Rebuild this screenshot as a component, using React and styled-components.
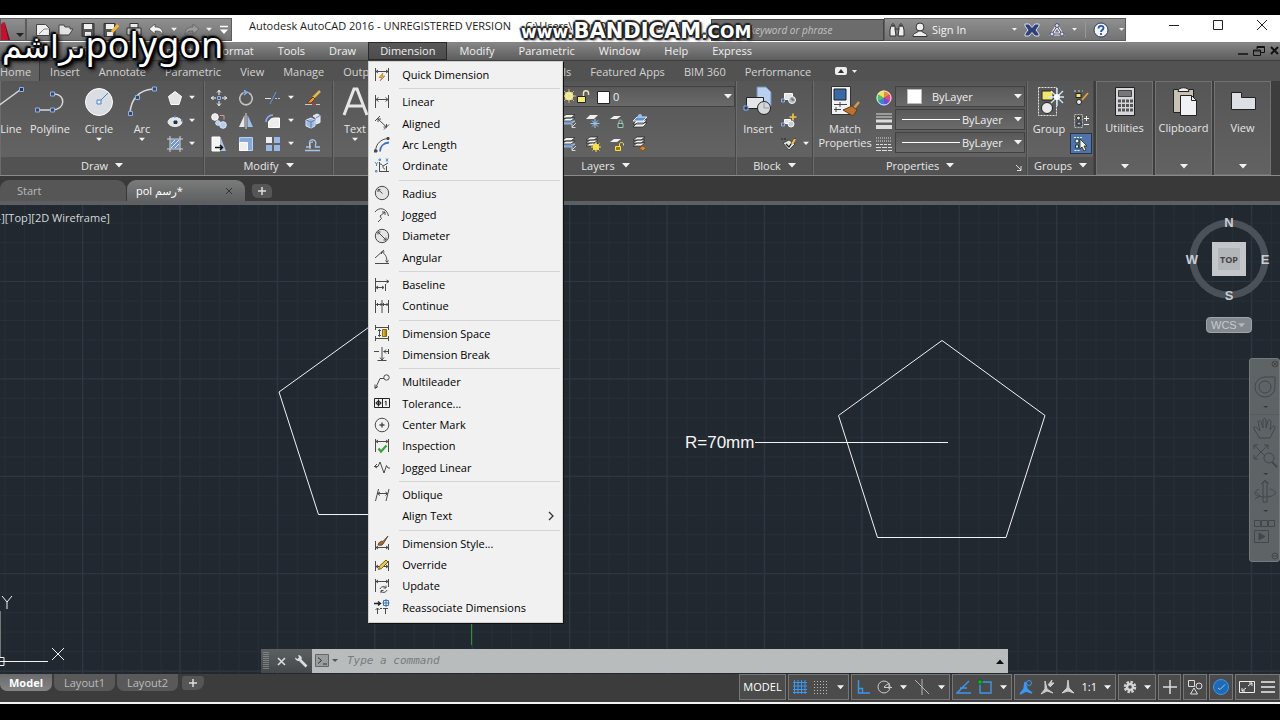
import React from "react";
import styled, { createGlobalStyle, css } from "styled-components";

const GlobalStyle = createGlobalStyle`
  * {
    box-sizing: border-box;
  }
  body {
    margin: 0;
    background: #000;
    overflow: hidden;
    font-family: "Open Sans", "Noto Sans", "DejaVu Sans", sans-serif;
    font-size: 11px;
    color: #e6e6e6;
  }
  button, input, select {
    font: inherit;
    color: inherit;
    margin: 0;
    padding: 0;
    border: none;
    background: none;
  }
  svg {
    display: block;
    flex: none;
  }
`;

const Screen = styled.div`
  display: flex;
  flex-direction: column;
  height: 100vh;
  padding: 15px 0 16px;
  background: #000;
`;

const AppWindow = styled.main`
  position: relative;
  flex: 1;
  min-height: 0;
  display: flex;
  flex-direction: column;
  background: #3a3a3a;
  border-bottom: 2px solid #f2f2f2;
`;

/* ---------- title bar ---------- */

const TitleBar = styled.header`
  display: flex;
  align-items: flex-end;
  height: 27px;
  padding-bottom: 1px;
  background: #fff;
  color: #1b1b1b;
`;

const barFill = css`
  background: linear-gradient(#8f8f8f, #737373);
  border: 1px solid #5c5c5c;
`;

const AppButton = styled.button`
  ${barFill}
  display: flex;
  align-items: center;
  width: 26px;
  height: 23px;
`;

const QuickAccess = styled.div`
  ${barFill}
  display: flex;
  align-items: center;
  justify-content: space-between;
  width: 206px;
  height: 23px;
  padding: 0 2px 0 8px;
`;

const IconButton = styled.button`
  display: flex;
  align-items: center;
  justify-content: center;
  flex: none;
  width: ${(p) => p.$w || 18}px;
  height: ${(p) => p.$h || 18}px;
`;

const Title = styled.h1`
  flex: 1;
  align-self: flex-start;
  overflow: hidden;
  margin: 0;
  padding-left: 17px;
  font-size: 11px;
  font-weight: normal;
  line-height: 21px;
  white-space: pre;
`;

const Search = styled.input`
  width: 173px;
  height: 22px;
  padding-left: 7px;
  background: #6c6c6c;
  border: 1px solid #444;
  color: #ddd;
  font-size: 10px;
  &::placeholder {
    color: #c2c2c2;
    font-style: italic;
    opacity: 1;
  }
`;

const InfoCenter = styled.div`
  ${barFill}
  display: flex;
  align-items: center;
  width: 242px;
  height: 23px;
  padding-left: 2px;
  color: #f3f3f3;
`;

const SignIn = styled.button`
  width: 80px;
  text-align: left;
`;

const WindowControls = styled.div`
  display: flex;
  align-items: center;
  justify-content: flex-end;
  gap: 26px;
  width: 154px;
  height: 27px;
  padding: 0 9px 5px 0;
`;

/* ---------- menu bar ---------- */

const MenuBar = styled.nav`
  display: flex;
  align-items: stretch;
  height: 19px;
  padding-left: 18px;
  background: linear-gradient(#878787, #5d5d5d);
  border-bottom: 1px solid #3f3f3f;
`;

const MenuSlot = styled.div`
  position: relative;
  display: flex;
  flex: none;
`;

const MenuButton = styled.button`
  padding: 0 12px;
  line-height: 18px;
  color: #f0f0f0;
  ${(p) =>
    p.$open &&
    css`
      background: linear-gradient(#595959, #4b4b4b);
      box-shadow: inset 0 0 0 1px #2a2a2a;
    `}
`;

const DocControls = styled.div`
  display: flex;
  align-items: center;
  gap: 5px;
  margin-left: auto;
`;

const Menu = styled.ul`
  position: absolute;
  z-index: 5;
  top: 19px;
  left: 0;
  display: flex;
  flex-direction: column;
  width: 195px;
  height: 562px;
  margin: 0;
  padding: 2px 2px 4px;
  list-style: none;
  background: #f1f1f1;
  border: 1px solid #cfcfcf;
  box-shadow: 1px 1px 0 #111;
`;

const MenuRow = styled.li`
  flex: 1;
  display: flex;
`;

const MenuRule = styled.li`
  flex: none;
  height: 6px;
  margin-left: 28px;
  background: linear-gradient(#d5d5d5, #d5d5d5) 0 3px / 100% 1px no-repeat;
`;

const MenuItem = styled.button`
  flex: 1;
  display: grid;
  grid-template-columns: 16px 1fr 12px;
  column-gap: 12px;
  align-items: center;
  padding: 0 5px 0 3px;
  color: #000;
  text-align: left;
`;

/* ---------- ribbon ---------- */

const RibbonTabs = styled.nav`
  display: flex;
  align-items: stretch;
  height: 20px;
  background: #525252;
`;

const RibbonTab = styled.button`
  flex: none;
  padding: 0 9px 0 10px;
  line-height: 21px;
  color: #d2d2d2;
  ${(p) =>
    p.$active &&
    css`
      padding: 0 8px 0 0;
      background: #626262;
      border-right: 1px solid #3c3c3c;
    `}
`;

const Ribbon = styled.section`
  display: flex;
  height: 95px;
  padding-right: 9px;
  background: #3d3d3d;
  border-bottom: 1px solid #8a8a8a;
`;

const Panel = styled.section`
  display: flex;
  flex-direction: column;
  flex: ${(p) => (p.$w ? "none" : "1")};
  width: ${(p) => (p.$w ? `${p.$w}px` : "auto")};
  background: linear-gradient(#565656, #626262 70px);
  border-right: 1px solid #474747;
  border-left: 1px solid #6c6c6c;
`;

const PanelBody = styled.div`
  flex: 1;
  display: flex;
  min-height: 0;
  padding: 5px ${(p) => p.$right || 0}px 0 ${(p) => p.$left || 0}px;
`;

const PanelTitle = styled.button`
  position: relative;
  flex: none;
  display: flex;
  align-items: center;
  justify-content: center;
  gap: 7px;
  height: 18px;
  padding-bottom: 2px;
  background: #525252;
`;

const Launcher = styled.span`
  position: absolute;
  right: 4px;
  bottom: 4px;
`;

const BigTool = styled.button`
  flex: none;
  display: flex;
  flex-direction: column;
  align-items: center;
  justify-content: flex-start;
  width: ${(p) => p.$w}px;
  line-height: 14px;
  svg + span {
    margin-top: 6px;
    margin-bottom: 1px;
  }
`;

const ToolGrid = styled.div`
  flex: none;
  display: grid;
  grid-template-columns: ${(p) => p.$cols};
  grid-auto-rows: 23px;
  align-items: center;
  justify-items: center;
`;

const PressedTool = styled(IconButton)`
  background: #5273a8;
  border: 1px solid #24344f;
`;

const SelectStack = styled.div`
  flex: 1;
  display: flex;
  flex-direction: column;
  gap: 2px;
`;

const SelectBox = styled.label`
  position: relative;
  display: block;
  flex: none;
  height: 21px;
  background: linear-gradient(#595959, #6a6a6a);
  border: 1px solid #414141;
  & > svg {
    position: absolute;
    top: 1px;
    left: ${(p) => p.$iconLeft || 4}px;
    pointer-events: none;
  }
  & > svg:last-child {
    top: 7px;
    right: 2px;
    left: auto;
  }
`;

const Select = styled.select`
  appearance: none;
  width: 100%;
  height: 19px;
  padding-left: ${(p) => p.$indent}px;
  color: #efefef;
`;

const CollapsedPanel = styled.button`
  flex: none;
  display: flex;
  flex-direction: column;
  align-items: center;
  width: 57px;
  margin-left: 2px;
  padding: 5px 0 5px;
  background: linear-gradient(#565656, #626262);
  border: 1px solid #727272;
  span {
    flex: 1;
    padding-top: 3px;
  }
`;

/* ---------- document tabs ---------- */

const FileTabs = styled.nav`
  display: flex;
  align-items: flex-end;
  height: 29px;
  background: #393939;
  border-bottom: 4px solid #5d6062;
`;

const FileTab = styled.button`
  display: flex;
  align-items: center;
  justify-content: space-between;
  width: ${(p) => p.$w}px;
  height: 21px;
  margin-right: 1px;
  padding: 0 12px 0 ${(p) => p.$left}px;
  border-radius: 9px 9px 0 0;
  background: ${(p) => (p.$active ? "linear-gradient(#7b7b7b, #5f6162)" : "#565656")};
  color: ${(p) => (p.$active ? "#fff" : "#b9b9b9")};
`;

const AddTab = styled.button`
  display: flex;
  align-items: center;
  justify-content: center;
  width: ${(p) => p.$w || 20}px;
  height: 14px;
  margin: ${(p) => p.$m};
  border-radius: ${(p) => p.$r};
  background: #565656;
`;

/* ---------- drawing area ---------- */

const Canvas = styled.section`
  position: relative;
  flex: 1;
  min-height: 0;
  overflow: hidden;
  background: #212830;
`;

const Sheet = styled.svg`
  position: absolute;
  top: 0;
  left: 0;
  width: 100%;
  height: 100%;
`;

const ViewportLabel = styled.button`
  position: absolute;
  top: 5px;
  left: -6px;
  line-height: 16px;
  color: #d5d8da;
`;

const ViewCube = styled.div`
  position: absolute;
  top: 7px;
  right: 6px;
  display: flex;
  flex-direction: column;
  align-items: center;
  width: 90px;
  gap: 12px;
`;

const WcsSelect = styled.button`
  display: flex;
  align-items: center;
  justify-content: space-between;
  width: 46px;
  height: 16px;
  padding: 0 6px 0 4px;
  border-radius: 4px;
  border: 1px solid #a0a4a9;
  background: #84898f;
  color: #c6cad0;
  font-family: "Liberation Sans", sans-serif;
`;

const NavBar = styled.div`
  position: absolute;
  top: 153px;
  right: 0;
  width: 31px;
  height: 204px;
  background: #5e6366;
  border: 1px solid #757a7c;
  border-radius: 3px;
`;

const CommandLine = styled.form`
  position: absolute;
  right: 272px;
  bottom: 1px;
  left: 261px;
  display: flex;
  height: 24px;
  background: #b9bcbd;
`;

const CommandGrip = styled.div`
  display: flex;
  align-items: center;
  gap: 8px;
  width: 51px;
  padding-left: 2px;
  background: linear-gradient(#5b6063, #44484b);
`;

const CommandInput = styled.input`
  flex: 1;
  padding: 0 0 1px 6px;
  font-family: "DejaVu Sans Mono", monospace;
  font-style: italic;
  color: #333;
  &::placeholder {
    color: #777b7d;
    opacity: 1;
  }
`;

/* ---------- bottom bar ---------- */

const BottomBar = styled.footer`
  display: flex;
  justify-content: space-between;
  height: 28px;
  background: #3c3c3c;
`;

const LayoutTabs = styled.nav`
  display: flex;
  align-items: flex-start;
  gap: 2px;
`;

const LayoutTab = styled.button`
  width: ${(p) => p.$w}px;
  height: 17px;
  line-height: 16px;
  border-radius: 0 0 7px 7px;
  background: ${(p) => (p.$active ? "linear-gradient(#6a6a6a, #858585)" : "#595959")};
  color: ${(p) => (p.$active ? "#fff" : "#bcbcbc")};
  font-weight: ${(p) => (p.$active ? 700 : 400)};
`;

const StatusBar = styled.div`
  display: flex;
  align-items: flex-start;
  gap: 2px;
`;

const StatusGroup = styled.div`
  display: flex;
  align-items: center;
  justify-content: space-around;
  width: ${(p) => p.$w}px;
  height: 26px;
  border: 1px solid #777;
  background: #4b4b4b;
  color: #fff;
`;

const StatusText = styled.button`
  line-height: 16px;
`;

/* ---------- video overlays ---------- */

const outline = css`
  color: #fff;
  text-shadow: -2px 0 1px #222, 2px 0 1px #222, 0 -2px 1px #222, 0 2px 1px #222,
    1px 1px 2px #222, -1px -1px 2px #222, 2px 2px 3px #222;
  white-space: nowrap;
  pointer-events: none;
`;

const Caption = styled.p`
  ${outline}
  text-shadow: -2px 0 1px #000, 2px 0 1px #000, 0 -2px 1px #000, 0 2px 1px #000,
    2px 2px 2px #000, -2px -2px 2px #000, 3px 3px 4px #000, 0 0 6px #000;
  position: absolute;
  z-index: 6;
  top: 5px;
  left: 2px;
  margin: 0;
  direction: rtl;
  font-family: "Noto Sans", "DejaVu Sans", sans-serif;
  font-size: 36px;
  line-height: 50px;
  span {
    font-size: 32px;
  }
`;

const Watermark = styled.p`
  ${outline}
  position: absolute;
  z-index: 6;
  top: 4px;
  left: 521px;
  margin: 0;
  font-family: "DejaVu Sans", sans-serif;
  font-weight: bold;
  font-size: 17px;
  line-height: 24px;
  b {
    font-size: 21px;
  }
`;

/* ---------- icons ---------- */

const Icon = ({ s = 16, w, h, box, children }) => (
  <svg
    width={w || s}
    height={h || s}
    viewBox={box || `0 0 ${w || s} ${h || s}`}
    fill="none"
    stroke="currentColor"
    aria-hidden="true"
  >
    {children}
  </svg>
);

const Arrow = ({ color = "#f2f2f2", w = 8 }) => (
  <svg width={w} height="5" viewBox="0 0 8 5" fill={color} aria-hidden="true">
    <path d="M0 0h8L4 4.5z" />
  </svg>
);

const dk = "#4a4a4a";

const dimIcons = {
  quick: (
    <>
      <path d="M1.500 1v13M14.500 1v13M2 4.500h12M4 3L2 4.500 4 6M12 3l2 1.500-2 1.500" />
      <path d="M9 6l-4 4.500h3L6 14l5-5H8z" fill="#f0b040" stroke="#c07a1c" strokeWidth=".7" />
    </>
  ),
  linear: <path d="M1.500 1v13M14.500 1v13M2 5.500h12M4.500 3.500L2 5.500l2.500 2M11.500 3.500l2.500 2-2.500 2" />,
  aligned: <path d="M1 6l5-5M10 14.500l5-5M4 4l8.500 8M4 7V4h3M12.500 9v3h-3" />,
  arc: (
    <>
      <path d="M1.500 14C2 6.500 7 2 14 1.500" />
      <path d="M6 14.500C6 10 9 6 15 5.500" stroke="#3c6fc4" strokeWidth="1.800" />
      <path d="M0 13h3v2H0zM13 .5h2v2h-2z" fill={dk} />
    </>
  ),
  ordinate: (
    <>
      <path d="M5.500 4v10M5.500 13.500H15M6 6c4 0 2 5 5 5M9 8l5-3M12.500 8v6" />
      <path d="M1 4l1.500 2L4 4M2.500 6v2M12 .5l2 3M14 .5l-2 3M5 1h1.500v1.500H5zM1.500 12.500H3V14H1.500z" stroke="#4b8fb5" />
    </>
  ),
  radius: (
    <>
      <circle cx="8" cy="8" r="6.700" fill="#e4e4e4" />
      <path d="M8.500 8.500L4 4.500M4 7V4.500h2.500" />
    </>
  ),
  jogged: <path d="M1 5C5-.5 13 1 14.500 9M4 15l3.500-3.500L6 9l5-4M8 5h3v3" />,
  diameter: (
    <>
      <circle cx="8" cy="8" r="6.700" fill="#e4e4e4" />
      <path d="M4 4l8 8M4 6.500V4h2.500M12 9.500V12H9.500" />
    </>
  ),
  angular: <path d="M1 14.500h14M1 9L10 1M8.500 3.500C12 5.500 13 9 13 13M7.500 5V3h3M11.500 11.500L13 13.500l1.500-2" />,
  baseline: <path d="M1.500 1v14M2 4.500h13M12.500 3L15 4.500 12.500 6M2 10.500h8M4 9l-2 1.500L4 12M8 9l2 1.500L8 12M11.500 7v7" />,
  cont: <path d="M1.500 2v13M8 2v13M14.500 2v13M2 6.500h12M4 5L2.500 6.500 4 8M6.500 5L8 6.500 6.500 8M10 5L8.500 6.500 10 8M12.500 5l1.500 1.500L12.500 8" />,
  space: (
    <>
      <path d="M1.500 0v5M14.500 0v5M1 2.500h14M1.500 11v5M14.500 11v5M1 13.500h14M5.500 5v6M4 6l1.500-1.500L7 6M4 10l1.500 1.500L7 10" />
      <path d="M8.500 4.500h4v7h-4z" fill="#e8bd2c" stroke="#8a6d10" />
      <path d="M10.500 6h2M10.500 8h2M10.500 10h2" stroke="#6b520a" />
    </>
  ),
  brk: <path d="M0 4.500h5M8 0v13M3.500 13.500h9M6 10.500l2 2.500 2-2.500M9.500 4.500h5M12 2.500l-2 2 2 2M14.500 2v5" />,
  multi: (
    <>
      <path d="M1.500 14L6 4.500h4M1 10.500V14.500l3-2" />
      <circle cx="12.500" cy="3.500" r="2.700" />
    </>
  ),
  tol: (
    <>
      <path d="M.5 3.500h15v9H.5zM8.500 3.500v9M12 6v4.500M10.800 7L12 6" stroke="#222" />
      <circle cx="4.500" cy="8" r="2" stroke="#222" />
      <path d="M4.500 4.500v7M1.500 8h6" stroke="#222" />
    </>
  ),
  center: (
    <>
      <circle cx="8" cy="8" r="6.800" />
      <path d="M8 5.500v5M5.500 8h5" strokeWidth="1.400" />
    </>
  ),
  inspect: (
    <>
      <path d="M1.500 1v13M14.500 1v13M2 3.500h12M4 2L2 3.500 4 5M12 2l2 1.500L12 5" />
      <path d="M4.500 10.500l2.500 3 5.500-6" stroke="#35a535" strokeWidth="2.200" />
    </>
  ),
  jogLin: <path d="M0 7.500h4l2-4.500 4 11 2.500-7.500L14 9h2M3 5L.5 7.500 3 9" />,
  oblique: <path d="M4.500 2l-3 12M15 2l-3 12M3.500 6.500h10M6 5L3.500 6.500 6 8.500M11.500 5l2 1.500-2 2" />,
  style: (
    <>
      <path d="M1.500 6v9M14.500 9v6M2 12.500h12M4 11l-2 1.500L4 14M12 11l2 1.500L12 14" />
      <path d="M4 10c1-4 4-4 5-3.500L14 1l-5 8C8 11 6 10 4 10z" fill="#a06a3a" stroke="#6b4a2c" />
    </>
  ),
  override: (
    <>
      <path d="M1.500 4v10M14.500 4v10M2 9.500h12M4 8L2 9.500 4 11M12 8l2 1.500-2 1.500" />
      <path d="M4.500 12.500l1-3.500L12 3l2 2-6.500 6.500z" fill="#ecc94e" stroke="#725f1d" />
    </>
  ),
  update: <path d="M1.500 1v13M14.500 1v8M2 3.500h12M4 2L2 3.500 4 5M12 2l2 1.500L12 5M6 11c1-3 5-3 6-1M12 7.500V10H9.500M13 12c-1 3-5 3-6 1M7 15v-2.500h2.500" />,
  reassoc: (
    <>
      <path d="M0 4.500h6M4 2.500l2.500 2-2.500 2" stroke="#222" strokeWidth="1.300" />
      <path d="M3.500 9v6M11.500 9v6M1.500 11l2-2 2 2" />
      <path d="M6 9.500h9" strokeDasharray="2 1" />
      <path d="M9.500 1.500h5v5h-5zM12 0v8M8.500 4H15.500" stroke="#3a72b8" />
    </>
  ),
};

const Line = () => (
  <Icon w={42} h={30} box="-12 0 42 30">
    <path d="M-12 26L18 4" stroke="#d8d8d8" strokeWidth="1.500" />
    <path d="M17.500 1.500h4v4h-4z" stroke="#86b2f0" fill="#334" />
  </Icon>
);
const Polyline = () => (
  <Icon w={32} h={30}>
    <path d="M3 24h15c14 0 14-16 2-16h-2" stroke="#d8d8d8" strokeWidth="1.500" />
    <path d="M1.500 22h4v4h-4zM16.500 22h4v4h-4zM16.500 6h4v4h-4z" stroke="#86b2f0" fill="#445" />
  </Icon>
);
const Circle = () => (
  <Icon s={30}>
    <circle cx="15" cy="16" r="13.500" fill="#dadde2" stroke="#fff" />
    <path d="M15 16l9-9" stroke="#4a80d0" />
    <path d="M13 14h4v4h-4z" stroke="#4a80d0" fill="#eef" />
  </Icon>
);
const Arc = () => (
  <Icon s={30}>
    <path d="M3 27C4 13 12 4 26 3" stroke="#d8d8d8" strokeWidth="1.500" />
    <path d="M1.500 25.500h4v4h-4zM8.500 9.500h4v4h-4zM25.500 1h4v4h-4z" stroke="#86b2f0" fill="#445" />
  </Icon>
);
const BigA = () => (
  <Icon s={30}>
    <path d="M4 29L14 3h3l10 26M8 20h15" strokeWidth="3" />
  </Icon>
);

const small = {
  polygon: <path d="M8 1.500l6.500 5-2.500 8H4l-2.500-8z" fill="#e4e4e4" stroke="#fff" />,
  ellipse: (
    <>
      <ellipse cx="8" cy="9" rx="7" ry="4.500" fill="#e2e4e8" stroke="#eee" />
      <path d="M7 8h3v2.500H7z" fill="#234" stroke="#234" />
      <path d="M14 7.500h2M7 3.500h2" stroke="#4a80d0" strokeWidth="2" />
    </>
  ),
  hatch: (
    <>
      <path d="M3.500 3.500h9v9h-9z" fill="#6f97cf" stroke="none" />
      <path d="M3 0v16M13 0v16M0 3h16M0 13h16" stroke="#d5d5d5" />
      <path d="M4 8l4-4M4 12l8-8M8 12l4-4" stroke="#dce8fa" />
    </>
  ),
  move: (
    <>
      <path d="M8 0v5M8 11v5M0 8h5M11 8h5M6 2.500L8 .5l2 2M6 13.500l2 2 2-2M2.500 6l-2 2 2 2M13.500 6l2 2-2 2" stroke="#fff" />
      <path d="M6.500 6.500h3v3h-3z" stroke="#86b2f0" />
    </>
  ),
  rotate: (
    <>
      <path d="M11 3a6.300 6.300 0 11-6 0" stroke="#c4c4c4" strokeWidth="1.600" />
      <path d="M5 3c2-1.500 4-1.500 6 0M6 0l3 2.500L6 5" stroke="#86b2f0" strokeWidth="1.300" />
    </>
  ),
  trim: (
    <>
      <path d="M0 8.500h6" stroke="#e0e0e0" />
      <path d="M10 8.500h6" stroke="#b9c4d8" strokeDasharray="2 1" />
      <path d="M5 14l6-12" stroke="#6a9ae0" />
    </>
  ),
  erase: (
    <>
      <path d="M15 1L8 8" stroke="#e4b64c" strokeWidth="2.500" />
      <path d="M8 7l2 2-4 4H2z" fill="#f0943a" stroke="#7a3a12" />
      <path d="M0 14.500h7M11 14.500h4" stroke="#ccc" />
      <path d="M7 14.500h4" stroke="#c43c3c" />
    </>
  ),
  copy: (
    <>
      <circle cx="4" cy="4" r="3.300" fill="#e8e8e8" stroke="#fff" />
      <circle cx="12" cy="12" r="3.300" fill="#b4cbee" stroke="#dce8fa" />
      <circle cx="7" cy="10" r="2.300" fill="#b4cbee" stroke="#dce8fa" />
      <path d="M9 2.500h4v4" stroke="#d89aa0" />
    </>
  ),
  mirror: (
    <>
      <path d="M6.500 2v12H1z" fill="#e8e8e8" stroke="none" />
      <path d="M9.500 2v12H15z" fill="#9fc0ee" stroke="none" />
      <path d="M8 0v16" stroke="#dcdcdc" />
    </>
  ),
  fillet: (
    <>
      <path d="M3.500 14.500V10c0-3 3-5 6-5h5v9.500z" fill="#eee" stroke="#fff" />
      <path d="M1 9c0-4 3-7 7-7" stroke="#86b2f0" strokeWidth="1.600" />
    </>
  ),
  explode: (
    <>
      <path d="M1 7l5-2 4 2v6l-4 2-5-2z" fill="#9db9e2" stroke="#dce8fa" />
      <path d="M8 3l4-2 3 1.500v7L11 11V5z" fill="#d4e0f4" stroke="#eef" />
      <path d="M6 9v6M1 7l5 2 4-2M11 5l4-2.500" stroke="#54709c" strokeWidth=".8" />
    </>
  ),
  stretch: (
    <>
      <path d="M1 1h8v14H1z" fill="#f4f4f4" stroke="#fff" />
      <path d="M9.500 1l5.500 14H9.500z" fill="#a9c4ea" stroke="none" />
      <path d="M4 11.500h7M9 9l2.500 2.500L9 14" stroke="#111" strokeWidth="1.500" />
    </>
  ),
  scale: (
    <>
      <path d="M1.500 1.500h13v13h-13z" fill="#86a9da" stroke="#b9d0f0" />
      <path d="M1.500 6.500h8v8h-8z" fill="#eee" stroke="#fff" />
    </>
  ),
  array: (
    <>
      <path d="M1 1h6v6H1z" fill="#eee" stroke="none" />
      <path d="M9 1h6v6H9zM1 9h6v6H1zM9 9h6v6H9z" fill="#9ab8e6" stroke="none" />
    </>
  ),
  offset: (
    <>
      <path d="M0 14.500h15M1 11h4V9C2 2 13 2 10.500 9v2H15" stroke="#a8c2ec" strokeWidth="1.300" />
      <path d="M5 13V10c-1-2 0-4 3-4" stroke="#dcdcdc" />
    </>
  ),
  layerA: (
    <>
      <path d="M1 11l4-3h9l-4 3z" fill="#6f97cf" stroke="#b9d0f0" strokeWidth=".7" />
      <path d="M1 8l4-3h9l-4 3zM1 5l4-3.500h9L10 5z" fill="#f0f0f0" stroke="#222" strokeWidth=".7" />
      <path d="M15 10l-4 4M11 11v3.500h3.500" stroke="#d5d5d5" />
    </>
  ),
  layerFreeze: (
    <>
      <path d="M1 6l4-4h8L9 6z" fill="#f0f0f0" stroke="none" />
      <path d="M10 6v9M5.500 10.500h9M7 7.500l6 6M13 7.500l-6 6" stroke="#9cc8f4" />
    </>
  ),
  layerLock: (
    <>
      <path d="M1 6l4-3h7L8 6z" fill="#f0f0f0" stroke="none" />
      <path d="M9 10.500h5v4H9z" fill="#455" stroke="#9fc9b4" />
      <path d="M10 10V8.500c0-2 3-2 3 0V10" stroke="#9fc9b4" />
    </>
  ),
  layerState: (
    <>
      <path d="M1 14l4-4h10l-4 4zM1 11l4-4h10l-4 4z" fill="#f0f0f0" stroke="#222" strokeWidth=".7" />
      <path d="M1 8l4-4h10l-4 4z" fill="#5f8fd6" stroke="#dce8fa" />
      <circle cx="8" cy="3" r="2" fill="#9fc0ee" stroke="none" />
    </>
  ),
  layerSun: (
    <>
      <path d="M1 10l4-3h8L9 10zM1 7l4-3h8L9 7zM1 4l4-3h8L9 4z" fill="#f0f0f0" stroke="#222" strokeWidth=".7" />
      <circle cx="11" cy="11" r="3.200" fill="#f7e04a" stroke="none" />
      <path d="M11 6v10M6 11h10M7.500 7.500l7 7M14.500 7.500l-7 7" stroke="#f7e04a" />
    </>
  ),
  layerUnlock: (
    <>
      <path d="M1 6l4-3h7L8 6z" fill="#f0f0f0" stroke="none" />
      <path d="M6.500 10.500h5v4h-5z" fill="#9a7a10" stroke="#f7e04a" />
      <path d="M10.500 10V8c0-2 4-2 4 0v1.500" stroke="#f7e04a" />
    </>
  ),
  layerMatch: (
    <>
      <path d="M1 10l4-3h8l-4 3zM1 7l4-3h8L9 7zM1 4l4-3h8L9 4z" fill="#f0f0f0" stroke="#222" strokeWidth=".7" />
      <path d="M7 12l4-2 3 2-3 3z" fill="#d08a3c" stroke="#8a4f18" />
    </>
  ),
  blockEdit: (
    <>
      <path d="M3.500 3.500h8v6h-8z" fill="#e4e4e4" stroke="#fff" />
      <circle cx="11" cy="10" r="3.500" fill="#b4b8be" stroke="#f4f4f4" />
      <path d="M11 7.500V10h2.500" stroke="#555" />
      <path d="M.5 9h3v3h-3z" stroke="#86b2f0" />
    </>
  ),
  blockNew: (
    <>
      <path d="M3.500 6.500h6v4h-6z" fill="#e4e4e4" stroke="#fff" />
      <circle cx="10" cy="11" r="3" fill="#c8ccd2" stroke="#f4f4f4" />
      <path d="M12 .5v7M8.500 4h7" stroke="#f2c14e" strokeWidth="1.700" />
      <path d="M.5 10h3v3h-3z" stroke="#86b2f0" />
    </>
  ),
  attr: (
    <>
      <path d="M2 7l6-3 6 4-6 6z" fill="#e4e4e4" stroke="#222" strokeWidth=".7" />
      <path d="M5 8l3 3 6-9" stroke="#222" strokeWidth="1.300" />
      <path d="M11 8l3-5" stroke="#f2c14e" strokeWidth="2" />
      <path d="M0 3h6" stroke="#222" strokeDasharray="2 1" />
    </>
  ),
  wheel: (
    <>
      <path d="M8 8V.5A7.500 7.500 0 0114.500 4z" fill="#f08a3c" stroke="none" />
      <path d="M8 8l6.500-4a7.500 7.500 0 010 8z" fill="#d84a8a" stroke="none" />
      <path d="M8 8l6.500 4A7.500 7.500 0 018 15.500z" fill="#6a50d0" stroke="none" />
      <path d="M8 8v7.500A7.500 7.500 0 011.500 12z" fill="#3c82e0" stroke="none" />
      <path d="M8 8l-6.500 4a7.500 7.500 0 010-8z" fill="#4cc070" stroke="none" />
      <path d="M8 8L1.500 4A7.500 7.500 0 018 .5z" fill="#f0e05a" stroke="none" />
      <circle cx="8" cy="8" r="7" stroke="#e8e8e8" />
    </>
  ),
  weight: (
    <>
      <path d="M0 1h16M0 4h16" stroke="#ddd" />
      <path d="M0 8h16" stroke="#ddd" strokeWidth="3" />
      <path d="M0 14h16" stroke="#ddd" strokeWidth="4" />
    </>
  ),
  ltype: (
    <>
      <path d="M0 2h16M0 5h16" stroke="#ddd" strokeDasharray="1 1" />
      <path d="M0 8.500h16" stroke="#ddd" strokeDasharray="3 1" />
      <path d="M0 11.500h16M0 14.500h16" stroke="#ddd" strokeDasharray="5 1" />
    </>
  ),
  groupEdit: (
    <>
      <path d="M1 1h9" stroke="#ccc" strokeDasharray="2 2" />
      <path d="M3 3.500h5v4H3z" fill="#f2e66a" stroke="#222" />
      <circle cx="6" cy="12" r="2.500" fill="#eee" stroke="#222" />
      <path d="M9 10l6-7" stroke="#e4a23c" strokeWidth="1.800" />
    </>
  ),
  groupAdd: (
    <>
      <path d="M1.500 1.500h8v13h-8z" stroke="#bbb" strokeDasharray="2 1" />
      <circle cx="5.500" cy="5" r="2" fill="#e4e4e4" stroke="#222" />
      <path d="M4 9h4v3H4z" fill="#86b2f0" stroke="#222" />
      <path d="M11 5.500h5M13.500 3v5M11 11.500h5" stroke="#eee" />
    </>
  ),
  groupSel: (
    <>
      <path d="M1 1.500h8M1.500 14.500h6" stroke="#cfe" strokeDasharray="2 1" />
      <circle cx="4" cy="5" r="2" fill="#dfe" stroke="#234" />
      <path d="M2.500 9h3v3h-3z" fill="#dfe" stroke="#234" />
      <path d="M7 3l7 7h-3l2 4-2 1-2-4-2 2z" fill="#f4f4d8" stroke="#222" strokeWidth=".8" />
    </>
  ),
};

const Tool = ({ name, label, arrow }) => (
  <IconButton aria-label={label || name} $h={20}>
    {arrow ? <Arrow w={6} /> : <Icon>{small[name]}</Icon>}
  </IconButton>
);

/* ---------- data ---------- */

const menusBefore = ["File", "Edit", "View", "Insert", "Format", "Tools", "Draw"];
const menusAfter = ["Modify", "Parametric", "Window", "Help", "Express"];
const ribbonTabs = [
  "Home", "Insert", "Annotate", "Parametric", "View", "Manage", "Output",
  "Add-ins", "A360", "Express Tools", "Featured Apps", "BIM 360", "Performance",
];

const dimensionMenu = [
  ["Quick Dimension", "quick"],
  null,
  ["Linear", "linear"],
  ["Aligned", "aligned"],
  ["Arc Length", "arc"],
  ["Ordinate", "ordinate"],
  null,
  ["Radius", "radius"],
  ["Jogged", "jogged"],
  ["Diameter", "diameter"],
  ["Angular", "angular"],
  null,
  ["Baseline", "baseline"],
  ["Continue", "cont"],
  null,
  ["Dimension Space", "space"],
  ["Dimension Break", "brk"],
  null,
  ["Multileader", "multi"],
  ["Tolerance...", "tol"],
  ["Center Mark", "center"],
  ["Inspection", "inspect"],
  ["Jogged Linear", "jogLin"],
  null,
  ["Oblique", "oblique"],
  ["Align Text", null],
  null,
  ["Dimension Style...", "style"],
  ["Override", "override"],
  ["Update", "update"],
  ["Reassociate Dimensions", "reassoc"],
];

/* ---------- sections ---------- */

const DimensionMenu = () => (
  <Menu>
    {dimensionMenu.map((item, i) =>
      item ? (
        <MenuRow key={item[0]}>
          <MenuItem>
            {item[1] ? (
              <svg width="16" height="16" viewBox="0 0 16 16" fill="none" stroke={dk} aria-hidden="true">
                {dimIcons[item[1]]}
              </svg>
            ) : (
              <i />
            )}
            <span>{item[0]}</span>
            {item[0] === "Align Text" && (
              <Icon w={12} h={10}>
                <path d="M6 1l4 4-4 4" stroke="#333" strokeWidth="1.300" />
              </Icon>
            )}
          </MenuItem>
        </MenuRow>
      ) : (
        <MenuRule key={i} />
      )
    )}
  </Menu>
);

const TopBar = () => (
  <TitleBar>
    <AppButton aria-label="Application menu">
      <Icon w={24} h={21}>
        <path d="M0 5l3-2 4 18H0z" fill="#c8102e" stroke="none" />
        <path d="M3 3l4 18h2L4 4z" fill="#7d0a1c" stroke="none" />
        <path d="M15 14h8l-4 4z" fill="#222" stroke="none" />
      </Icon>
    </AppButton>
    <QuickAccess>
      <Icon>
        <path d="M1.500 2.500h9l4 4v7h-13z" fill="#f0f0f0" stroke="#444" />
        <path d="M4 12l5-5h5" stroke="#888" />
      </Icon>
      <Icon>
        <path d="M1 13V3h5l1 2h5v2h3l-4 6z" fill="#e4e4e4" stroke="#444" />
      </Icon>
      <Icon>
        <path d="M2 1.500h12v13H2z" fill="#555" stroke="#333" />
        <path d="M4 2h8v5H4zM5 10h6v4H5z" fill="#f0f0f0" stroke="none" />
      </Icon>
      <Icon>
        <path d="M1 1.500h11v13H1z" fill="#555" stroke="#333" />
        <path d="M3 2h8v5H3zM4 10h6v4H4z" fill="#f0f0f0" stroke="none" />
        <path d="M15 3l-6 7" stroke="#f2b53c" strokeWidth="3" />
      </Icon>
      <Icon>
        <path d="M4 1.500h8V6H4z" fill="#eee" stroke="#333" />
        <path d="M1 6h14v7H1z" fill="#d0d0d0" stroke="#333" />
      </Icon>
      <Icon>
        <path d="M1 7l6-5v3c5 0 8 2 8 8-2-4-4-4-8-4v3z" fill="#f4f4f4" stroke="#444" strokeWidth=".7" />
      </Icon>
      <Arrow w={6} />
      <Icon>
        <path d="M15 7L9 2v3C4 5 1 7 1 13c2-4 4-4 8-4v3z" fill="#9a9a9a" stroke="#5a5a5a" strokeWidth=".7" />
      </Icon>
      <Arrow w={6} />
      <Icon w={10} h={10}>
        <path d="M1 1.500h8" stroke="#fff" strokeWidth="1.500" />
        <path d="M1 4.500h8L5 9z" fill="#fff" stroke="none" />
      </Icon>
    </QuickAccess>
    <Title>{"Autodesk AutoCAD 2016 - UNREGISTERED VERSION     C:\\Users\\user\\Desktop\\draw.dwg"}</Title>
    <Search aria-label="Search" placeholder="Type a keyword or phrase" />
    <InfoCenter>
      <IconButton aria-label="Find" $w={20}>
        <Icon>
          <path d="M2 4h4v3l1 7H1V8zM10 4h4l1 4v6H9l1-7zM6 7h4M3 2h2v2H3zM11 2h2v2h-2z" fill="#eee" stroke="#333" />
        </Icon>
      </IconButton>
      <IconButton aria-label="User" $w={25}>
        <Icon>
          <circle cx="8" cy="5" r="4" fill="#eee" stroke="#333" />
          <path d="M1 14.500c0-4 4-3 5.500-5.500h3c1.500 2.500 5.500 1.500 5.500 5.500z" fill="#eee" stroke="#333" />
        </Icon>
      </IconButton>
      <SignIn>Sign In</SignIn>
      <Arrow w={5} />
      <IconButton aria-label="Exchange Apps" $w={30}>
        <Icon>
          <path d="M1 2h4l3 3.500L11 2h4v2l-3 4 3 4v2h-4l-3-3.500L5 14H1v-2l3-4-3-4z" fill="#30407a" stroke="#d8dcea" />
        </Icon>
      </IconButton>
      <IconButton aria-label="Connect" $w={20}>
        <Icon>
          <path d="M8 4l5 8H3z" stroke="#eee" strokeWidth="3" />
          <path d="M8 4l5 8H3z" stroke="#4a5080" />
          <circle cx="8" cy="3.500" r="2" fill="#ddd" stroke="#4a5080" />
          <circle cx="3" cy="12" r="2" fill="#ddd" stroke="#4a5080" />
          <circle cx="13" cy="12" r="2" fill="#ddd" stroke="#4a5080" />
        </Icon>
      </IconButton>
      <IconButton aria-label="More" $w={14}>
        <Arrow w={5} />
      </IconButton>
      <IconButton aria-label="Help" $w={38}>
        <Icon w={34}>
          <path d="M2.500 0v16" stroke="#999" />
          <circle cx="18" cy="8" r="7" fill="#f4f4f4" stroke="#2c3c66" />
          <path d="M15.500 6.500c0-3.500 5-3.500 5-.5 0 2-2.500 2-2.500 4M18 11v2" stroke="#2456a8" strokeWidth="1.800" />
        </Icon>
      </IconButton>
      <Arrow w={5} />
    </InfoCenter>
    <WindowControls>
      <IconButton aria-label="Minimize">
        <Icon w={12} h={12}><path d="M1 6.500h10" stroke="#222" /></Icon>
      </IconButton>
      <IconButton aria-label="Maximize">
        <Icon w={12} h={12}><path d="M1.500 1.500h9v9h-9z" stroke="#222" /></Icon>
      </IconButton>
      <IconButton aria-label="Close">
        <Icon w={12} h={12}><path d="M1 1l10 10M11 1L1 11" stroke="#222" /></Icon>
      </IconButton>
    </WindowControls>
  </TitleBar>
);

const Menus = () => (
  <MenuBar>
    {menusBefore.map((m) => (
      <MenuButton key={m}>{m}</MenuButton>
    ))}
    <MenuSlot>
      <MenuButton $open aria-expanded="true">Dimension</MenuButton>
      <DimensionMenu />
    </MenuSlot>
    {menusAfter.map((m) => (
      <MenuButton key={m}>{m}</MenuButton>
    ))}
    <DocControls>
      <Icon w={10} h={12}><path d="M0 9h10" stroke="#111" strokeWidth="1.500" /></Icon>
      <Icon w={12} h={12}><path d="M4 4V1.500h7.500v6H8M.5 5h7v5.500h-7zM.5 6h7M4 2.500h7" stroke="#111" /></Icon>
      <Icon w={10} h={12}><path d="M1 2l7 7M8 2L1 9" stroke="#111" strokeWidth="2" /></Icon>
    </DocControls>
  </MenuBar>
);

const RibbonPanels = () => (
  <Ribbon>
    <Panel $w={204}>
      <PanelBody>
        <BigTool $w={20}><Line /><span>Line</span></BigTool>
        <BigTool $w={58}><Polyline /><span>Polyline</span></BigTool>
        <BigTool $w={40}><Circle /><span>Circle</span><Arrow w={6} /></BigTool>
        <BigTool $w={46}><Arc /><span>Arc</span><Arrow w={6} /></BigTool>
        <ToolGrid $cols="20px 14px">
          <Tool name="polygon" /><Tool arrow label="Polygon options" />
          <Tool name="ellipse" /><Tool arrow label="Ellipse options" />
          <Tool name="hatch" /><Tool arrow label="Hatch options" />
        </ToolGrid>
      </PanelBody>
      <PanelTitle>Draw <Arrow /></PanelTitle>
    </Panel>
    <Panel $w={129}>
      <PanelBody>
        <ToolGrid $cols="27px 27px 28px 8px 36px">
          <Tool name="move" /><Tool name="rotate" /><Tool name="trim" /><Tool arrow label="Trim options" /><Tool name="erase" />
          <Tool name="copy" /><Tool name="mirror" /><Tool name="fillet" /><Tool arrow label="Fillet options" /><Tool name="explode" />
          <Tool name="stretch" /><Tool name="scale" /><Tool name="array" /><Tool arrow label="Array options" /><Tool name="offset" />
        </ToolGrid>
      </PanelBody>
      <PanelTitle>Modify <Arrow /></PanelTitle>
    </Panel>
    <Panel $w={142}>
      <PanelBody>
        <BigTool $w={42}><BigA /><span>Text</span><Arrow w={6} /></BigTool>
      </PanelBody>
      <PanelTitle>Annotation <Arrow /></PanelTitle>
    </Panel>
    <Panel>
      <PanelBody $left={81}>
        <SelectStack>
          <SelectBox>
            <Icon w={54} h={17}>
              <circle cx="7" cy="8" r="4" fill="#f5efb0" stroke="#f5e77a" />
              <path d="M7 1v14M0 8h14M2 3l10 10M12 3L2 13" stroke="#e8de90" strokeWidth=".7" />
              <path d="M15.500 8.500h8v6h-8z" fill="#f7ec7a" stroke="#222" />
              <path d="M21.500 8V5c0-3 5-3 5 0v2" stroke="#f0e8b0" strokeWidth="1.400" />
              <path d="M35.500 3.500h12v12h-12z" fill="#fff" stroke="#222" />
            </Icon>
            <Select aria-label="Layer" $indent={55}><option>0</option></Select>
            <Arrow />
          </SelectBox>
          <ToolGrid $cols="24px 24px 24px 22px">
            <Tool name="layerA" /><Tool name="layerFreeze" /><Tool name="layerLock" /><Tool name="layerState" />
            <Tool name="layerA" label="Layer previous" /><Tool name="layerSun" /><Tool name="layerUnlock" /><Tool name="layerMatch" />
          </ToolGrid>
        </SelectStack>
      </PanelBody>
      <PanelTitle>Layers <Arrow /></PanelTitle>
    </Panel>
    <Panel $w={77}>
      <PanelBody $left={1}>
        <BigTool $w={40}>
          <Icon s={30}>
            <path d="M14 1h9l5 5v14H14z" fill="#b9cfee" stroke="#6f8fc0" />
            <path d="M3.500 11.500h17v11h-17z" fill="#e4e6ea" stroke="#222" />
            <circle cx="21" cy="22" r="6.500" fill="#d4d7dc" stroke="#222" />
            <path d="M21 17v5h5" stroke="#999" />
            <path d="M1 20h4v4H1z" fill="#334" stroke="#86b2f0" />
          </Icon>
          <span>Insert</span>
        </BigTool>
        <ToolGrid $cols="22px 12px">
          <Tool name="blockEdit" /><i />
          <Tool name="blockNew" /><i />
          <Tool name="attr" /><Tool arrow label="Attribute options" />
        </ToolGrid>
      </PanelBody>
      <PanelTitle>Block <Arrow /></PanelTitle>
    </Panel>
    <Panel $w={214}>
      <PanelBody $left={3} $right={1}>
        <BigTool $w={56}>
          <Icon s={30}>
            <path d="M1.500.5h19v28h-19z" fill="#f0f2f4" stroke="#333" />
            <path d="M4 3h12v11H4z" fill="#3a6aa6" stroke="#222" />
            <path d="M4 18.500h13M4 23.500h7M10 16v5M6 21v5" stroke="#444" />
            <path d="M29 16l-5 6" stroke="#d09a58" strokeWidth="2.500" />
            <path d="M13 24l9-4 5 4-4 6z" fill="#b87334" stroke="#6a3a12" />
          </Icon>
          <span>Match Properties</span>
        </BigTool>
        <ToolGrid $cols="22px">
          <Tool name="wheel" /><Tool name="weight" /><Tool name="ltype" />
        </ToolGrid>
        <SelectStack>
          <SelectBox $iconLeft={10}>
            <Icon s={17}><path d="M1.500 1.500h14v14h-14z" fill="#fff" stroke="#bbb" /></Icon>
            <Select aria-label="Object colour" $indent={36}><option>ByLayer</option></Select>
            <Arrow />
          </SelectBox>
          <SelectBox $iconLeft={6}>
            <Icon w={58} h={17}><path d="M0 8.500h58" stroke="#fff" /></Icon>
            <Select aria-label="Lineweight" $indent={66}><option>ByLayer</option></Select>
            <Arrow />
          </SelectBox>
          <SelectBox $iconLeft={6}>
            <Icon w={58} h={17}><path d="M0 8.500h58" stroke="#fff" /></Icon>
            <Select aria-label="Linetype" $indent={66}><option>ByLayer</option></Select>
            <Arrow />
          </SelectBox>
        </SelectStack>
      </PanelBody>
      <PanelTitle>
        Properties <Arrow />
        <Launcher>
          <Icon w={6} h={6}><path d="M0 0l5 5M5 1v4.500H1" stroke="#ddd" /></Icon>
        </Launcher>
      </PanelTitle>
    </Panel>
    <Panel $w={67}>
      <PanelBody>
        <BigTool $w={42}>
          <Icon s={30}>
            <path d="M4.500 1.500h18v28h-18z" stroke="#e4e4e4" strokeDasharray="2 1" />
            <path d="M8 5h11v9H8z" fill="#f2e66a" stroke="#222" />
            <circle cx="13" cy="22" r="5.500" fill="#e8eaec" stroke="#222" />
            <path d="M23 2v18M14 11h16M17 5l12 12M29 5L17 17" stroke="#cfeaff" strokeWidth="1.400" />
            <circle cx="23" cy="11" r="3" fill="#fff" stroke="none" />
          </Icon>
          <span>Group</span>
        </BigTool>
        <ToolGrid $cols="22px">
          <Tool name="groupEdit" /><Tool name="groupAdd" />
          <PressedTool aria-label="Group selection" $w={22} $h={21}><Icon>{small.groupSel}</Icon></PressedTool>
        </ToolGrid>
      </PanelBody>
      <PanelTitle>Groups <Arrow /></PanelTitle>
    </Panel>
    <CollapsedPanel>
      <Icon s={30}>
        <path d="M5.500.5h19v28h-19z" fill="#d5d7da" stroke="#222" />
        <path d="M8.500 3.500h13v6h-13z" fill="#777" stroke="#444" />
        <path d="M8 14h15M8 18.500h15M8 23h15" stroke="#555" strokeWidth="3" strokeDasharray="3 1" />
      </Icon>
      <span>Utilities</span>
      <Arrow />
    </CollapsedPanel>
    <CollapsedPanel>
      <Icon s={30}>
        <path d="M4.500 2.500h20v23h-20z" fill="#c9c2b4" stroke="#222" />
        <path d="M9 4.500c0-5 11-5 11 0z" fill="#f0f0f0" stroke="#222" />
        <path d="M11.500 8.500h11l5 5v15h-16z" fill="#f0f1f4" stroke="#222" />
        <path d="M22.500 8.500v5h5" stroke="#222" />
      </Icon>
      <span>Clipboard</span>
      <Arrow />
    </CollapsedPanel>
    <CollapsedPanel>
      <Icon s={30}>
        <path d="M3.500 5.500h10v5h14v12h-24z" fill="#dcdfe3" stroke="#222" />
      </Icon>
      <span>View</span>
      <Arrow />
    </CollapsedPanel>
  </Ribbon>
);

const DrawingArea = () => (
  <Canvas>
    <Sheet fill="none" aria-hidden="true">
      <defs>
        <pattern id="minor" width="19.480" height="19.480" patternUnits="userSpaceOnUse" x="82.500" y="76">
          <path d="M.5 0v20M0 .5h20" stroke="#262e37" />
        </pattern>
        <pattern id="major" width="97.400" height="97.400" patternUnits="userSpaceOnUse" x="82" y="76">
          <path d="M.5 0v98M0 .5h98" stroke="#2f3842" />
        </pattern>
      </defs>
      <rect width="100%" height="100%" fill="url(#minor)" />
      <rect width="100%" height="100%" fill="url(#major)" />
      <path d="M471.500 340v100" stroke="#1f9a30" />
      <g stroke="#f2f2f2">
        <path d="M383 112l103 75-39 122.500H318.500L279 187z" />
        <path d="M942 135.500l103 75-39 122H877.500L838.500 210.500z" />
        <path d="M755 237.500h193" />
        <path d="M0 456.500h48M-3 452.500h7v8h-7zM52 443l12 12M64 443l-12 12M2 391l5 6 5-6M7 397v7" />
        <path d="M.5 406v46" stroke="#777" />
      </g>
      <text x="685" y="243" fill="#f4f4f4" fontFamily="Liberation Sans, sans-serif" fontSize="17">
        R=70mm
      </text>
    </Sheet>
    <ViewportLabel>[-][Top][2D Wireframe]</ViewportLabel>
    <ViewCube>
      <Icon w={90} h={93}>
        <circle cx="45" cy="47" r="36" stroke="#4a5159" strokeWidth="7" />
        <path d="M28 30h34v34H28z" fill="#c4c7c9" stroke="none" />
        <path d="M34 36h22v22H34z" fill="#b3b6b9" stroke="none" />
        <g fill="#c8cdd2" stroke="none" fontFamily="Liberation Sans, sans-serif" fontWeight="bold" fontSize="13" textAnchor="middle">
          <text x="45" y="15">N</text>
          <text x="8" y="52">W</text>
          <text x="81" y="52">E</text>
          <text x="45" y="88">S</text>
        </g>
        <text x="45" y="51" fill="#444" stroke="none" fontFamily="Open Sans, sans-serif" fontWeight="bold" fontSize="9" textAnchor="middle">
          TOP
        </text>
      </Icon>
      <WcsSelect>WCS <Arrow color="#b4b8bd" w={7} /></WcsSelect>
    </ViewCube>
    <NavBar>
      <Icon w={29} h={202}>
        <g stroke="#41474b">
          <circle cx="25" cy="5" r="3" />
          <path d="M23 3l4 4M27 3l-4 4" />
          <path d="M15 18h10v10a10 10 0 11-10-10z" />
          <circle cx="15" cy="28" r="6" />
          <path d="M0 55.500h29" stroke="#565b5e" />
          <path d="M9 78l-5-8c-1-2 1-3 3-1l3 3-2-9c0-2 2-2 3 0l2 6v-8c0-2 3-2 3 0v8l2-7c1-2 3-1 3 1l-1 8 2-3c2-2 3-1 3 1l-5 10H9z" />
          <path d="M4 86l14 14M18 86L4 100M4 90v-4h4M14 86h4v4M4 96v4h4" />
          <circle cx="19" cy="99" r="5" fill="#5e6366" />
          <path d="M22 103l5 5" strokeWidth="2" />
          <path d="M13 123h4v20h-4zM11 125l4-4 4 4M9 130c-8 4-4 8 6 8s15-5 5-8M5 140l5-3-4-4" />
          <path d="M4.500 161.500h6v6h-6zM11.500 161.500h6v6h-6zM18.500 161.500h6v6h-6zM4.500 171.500h14v12h-14z" />
          <path d="M9 174l6 3.500L9 181z" fill="#41474b" />
          <circle cx="25" cy="197" r="3" />
          <path d="M23 197h4" />
        </g>
        <path d="M13 47h5l-2 2zM13 114h5l-2 2zM13 151h5l-2 2z" fill="#33383b" stroke="none" />
      </Icon>
    </NavBar>
    <CommandLine onSubmit={(e) => e.preventDefault()}>
      <CommandGrip>
        <Icon w={6} h={18}><path d="M1 0v18M3 0v18M5 0v18" stroke="#aaa" strokeDasharray="1 1" /></Icon>
        <Icon w={9} h={9}><path d="M1 1l7 7M8 1L1 8" stroke="#ddd" strokeWidth="1.600" /></Icon>
        <Icon w={14} h={14}>
          <path d="M6 6l6.500 6.500" stroke="#ddd" strokeWidth="2.600" />
          <path d="M1 3.500C1 7 5 8 7 6S7 1 4 1l1 2.500L3.500 5z" fill="#ddd" stroke="none" />
        </Icon>
      </CommandGrip>
      <IconButton type="button" aria-label="Recent commands" $w={29} $h={24}>
        <Icon w={23} h={14}>
          <path d="M.5.5h13v12H.5z" fill="#9a9d9f" stroke="#666" />
          <path d="M3 3.500l3.500 3L3 9.500M8 10h4" stroke="#333" />
          <path d="M17 5h6l-3 3z" fill="#555" stroke="none" />
        </Icon>
      </IconButton>
      <CommandInput aria-label="Command" placeholder="Type a command" />
      <IconButton type="button" aria-label="History" $w={16} $h={24}>
        <Icon w={8} h={5}><path d="M0 5l4-4.500L8 5z" fill="#111" stroke="none" /></Icon>
      </IconButton>
    </CommandLine>
  </Canvas>
);

const DownArrow = () => (
  <IconButton aria-label="Options" $w={10}><Arrow w={7} /></IconButton>
);

const blue = "#3d97ee";

const Status = () => (
  <StatusBar>
    <StatusGroup $w={47}><StatusText>MODEL</StatusText></StatusGroup>
    <StatusGroup $w={61}>
      <Icon><path d="M2.500 1v14M6 1v14M9.500 1v14M13 1v14M1 3.500h14M1 7h14M1 10.500h14M1 13.500h14" stroke={blue} /></Icon>
      <Icon><path d="M1 2.500h14M1 5.500h14M1 8.500h14M1 11.500h14M1 14.500h14" stroke="#bbb" strokeDasharray="1 2" /></Icon>
      <DownArrow />
    </StatusGroup>
    <StatusGroup $w={99}>
      <Icon><path d="M3.500 1v13H15M3.500 9.500h4v4" stroke={blue} strokeWidth="1.400" /></Icon>
      <Icon><circle cx="7" cy="8" r="6" stroke="#ccc" /><path d="M7 8.500h8M7 8l5-4v6" stroke="#ccc" /></Icon>
      <DownArrow />
      <Icon><path d="M8 0v16M1 1l14 14" stroke="#b5b5b5" /></Icon>
      <DownArrow />
    </StatusGroup>
    <StatusGroup $w={60}>
      <Icon><path d="M15 14H1L13 2M4 9h7" stroke={blue} strokeWidth="1.400" /></Icon>
      <Icon><path d="M3 3h11v11H3z" stroke={blue} strokeWidth="1.400" /><path d="M1 1h4v4H1z" fill="#1fae2c" stroke="#0c6416" /></Icon>
      <DownArrow />
    </StatusGroup>
    <StatusGroup $w={102}>
      <Icon>
        <path d="M7 3l2 7 5 4-6-2-6 3 4-5z" fill={blue} stroke={blue} strokeWidth="1.500" />
        <circle cx="11" cy="4" r="2.500" stroke={blue} />
      </Icon>
      <Icon><path d="M6 2l2 8 6 4-6-2-6 3 4-5zM9 6l4-5-1 3h3l-4 4" fill="#ccc" stroke="#ccc" /></Icon>
      <Icon><path d="M8 1l1 8 5 5-6-2-6 2 5-5z" fill="#ccc" stroke="#ccc" /></Icon>
      <StatusText>1:1</StatusText>
      <DownArrow />
    </StatusGroup>
    <StatusGroup $w={38}>
      <Icon>
        <circle cx="8" cy="8" r="5" stroke="#d5d5d5" strokeWidth="2.500" strokeDasharray="2.400 1.500" />
        <circle cx="8" cy="8" r="3" stroke="#d5d5d5" strokeWidth="2.500" />
      </Icon>
      <DownArrow />
    </StatusGroup>
    <StatusGroup $w={23}><Icon><path d="M8 1v14M1 8h14" stroke="#ddd" strokeWidth="1.500" /></Icon></StatusGroup>
    <StatusGroup $w={24}>
      <Icon><path d="M1.500 1.500h6v6h-6zM7 9l3.500 6h-7z" stroke="#ddd" /><circle cx="12" cy="7" r="3" stroke="#ddd" /></Icon>
    </StatusGroup>
    <StatusGroup $w={24}>
      <Icon><circle cx="8" cy="8" r="7.500" fill="#1f6ab4" stroke="#3d97ee" /><path d="M5 9l2 1.500 5-5" stroke="#9cc8f4" /></Icon>
    </StatusGroup>
    <StatusGroup $w={45}>
      <Icon><path d="M.5 2.500h15v11H.5zM9 7l4-3M10 4h3v3M7 9l-4 3M6 12H3V9" stroke="#eee" /></Icon>
      <Icon><path d="M1 3h14M1 8h14M1 13h14" stroke="#eee" strokeWidth="1.500" /></Icon>
    </StatusGroup>
  </StatusBar>
);

const App = () => (
  <Screen>
    <GlobalStyle />
    <AppWindow>
      <TopBar />
      <Menus />
      <RibbonTabs>
        {ribbonTabs.map((t, i) => (
          <RibbonTab key={t} $active={i === 0}>{t}</RibbonTab>
        ))}
        <IconButton aria-label="Minimize ribbon" $w={52} $h={20}>
          <Icon w={22} h={8}>
            <rect x="0" y="0" width="12" height="8" rx="2" fill="#eee" stroke="none" />
            <path d="M3 6l3-4 3 4z" fill="#333" stroke="none" />
            <path d="M17 3h5l-2.500 3z" fill="#eee" stroke="none" />
          </Icon>
        </IconButton>
      </RibbonTabs>
      <RibbonPanels />
      <FileTabs>
        <FileTab $w={126} $left={17}>Start</FileTab>
        <FileTab $w={118} $left={9} $active>
          <span dir="ltr">pol رسم*</span>
          <Icon w={8} h={8}><path d="M1 1l6 6M7 1L1 7" stroke="#333" /></Icon>
        </FileTab>
        <AddTab aria-label="New drawing" $m="0 0 3px 6px" $r="3px 6px 3px 6px">
          <Icon w={8} h={8}><path d="M4 0v8M0 4h8" stroke="#ddd" strokeWidth="1.500" /></Icon>
        </AddTab>
      </FileTabs>
      <DrawingArea />
      <BottomBar>
        <LayoutTabs>
          <LayoutTab $w={52} $active>Model</LayoutTab>
          <LayoutTab $w={61}>Layout1</LayoutTab>
          <LayoutTab $w={61}>Layout2</LayoutTab>
          <AddTab aria-label="New layout" $w={22} $m="2px 0 0 2px" $r="3px 3px 8px 3px">
            <Icon w={8} h={8}><path d="M4 0v8M0 4h8" stroke="#ddd" strokeWidth="1.500" /></Icon>
          </AddTab>
        </LayoutTabs>
        <Status />
      </BottomBar>
      <Caption>polygon<span>ىراشم</span></Caption>
      <Watermark>www.<b>BANDICAM</b>.COM</Watermark>
    </AppWindow>
  </Screen>
);

export default App;
